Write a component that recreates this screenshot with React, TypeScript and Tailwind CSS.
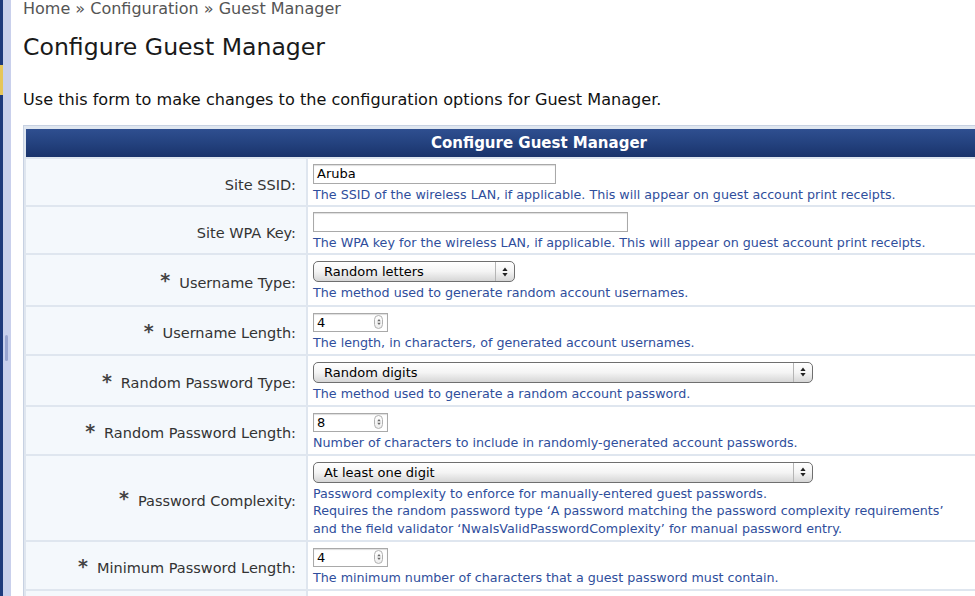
import React from 'react';

type Field = {
  label: string;
  required?: boolean;
  height: number;
  control: React.ReactNode;
  help: string[];
};

// up/down arrow pair used by the select and the number spinner
const Arrows: React.FC<{ w: number; h: number; color: string }> = ({ w, h, color }) => (
  <svg width={w} height={h} viewBox="0 0 6 10">
    <path d="M3 0.5 L5.6 4 H0.4 Z" fill={color} />
    <path d="M3 9.5 L5.6 6 H0.4 Z" fill={color} />
  </svg>
);

const SelectBox: React.FC<{ value: string; width: number }> = ({ value, width }) => (
  <div
    className="flex h-[21px] items-center rounded-[5px] border border-[#6f6f6f] bg-gradient-to-b from-white via-[#f4f4f4] to-[#d6d6d6] text-[13px] text-black shadow-[inset_0_1px_0_#fff]"
    style={{ width }}
  >
    <span className="flex-1 pl-[10px] leading-none">{value}</span>
    <span className="flex h-full w-[19px] items-center justify-center border-l border-[#b5b5b5]">
      <Arrows w={6} h={10} color="#222" />
    </span>
  </div>
);

const NumberBox: React.FC<{ value: string }> = ({ value }) => (
  <div className="flex h-[19px] w-[75px] items-center border border-[#a9a9a9] bg-white pl-[3px] pr-[4px] text-[13px] text-black shadow-[inset_0_1px_1px_#ddd]">
    <span className="flex-1 leading-none">{value}</span>
    <span className="flex h-[14px] w-[9px] items-center justify-center rounded-full border border-[#b0b0b0] bg-gradient-to-b from-white to-[#eee]">
      <Arrows w={4} h={8} color="#666" />
    </span>
  </div>
);

const TextBox: React.FC<{ value?: string; width: number }> = ({ value, width }) => (
  <div
    className="flex h-[20px] items-center border border-[#a9a9a9] bg-white pl-[3px] text-[13px] text-black shadow-[inset_0_1px_1px_#ddd]"
    style={{ width }}
  >
    <span className="leading-none">{value}</span>
  </div>
);

const fields: Field[] = [
  {
    label: 'Site SSID:',
    height: 46,
    control: <TextBox value="Aruba" width={243} />,
    help: ['The SSID of the wireless LAN, if applicable. This will appear on guest account print receipts.'],
  },
  {
    label: 'Site WPA Key:',
    height: 46,
    control: <TextBox width={315} />,
    help: ['The WPA key for the wireless LAN, if applicable. This will appear on guest account print receipts.'],
  },
  {
    label: 'Username Type:',
    required: true,
    height: 50,
    control: <SelectBox value="Random letters" width={202} />,
    help: ['The method used to generate random account usernames.'],
  },
  {
    label: 'Username Length:',
    required: true,
    height: 47,
    control: <NumberBox value="4" />,
    help: ['The length, in characters, of generated account usernames.'],
  },
  {
    label: 'Random Password Type:',
    required: true,
    height: 49,
    control: <SelectBox value="Random digits" width={500} />,
    help: ['The method used to generate a random account password.'],
  },
  {
    label: 'Random Password Length:',
    required: true,
    height: 47,
    control: <NumberBox value="8" />,
    help: ['Number of characters to include in randomly-generated account passwords.'],
  },
  {
    label: 'Password Complexity:',
    required: true,
    height: 84,
    control: <SelectBox value="At least one digit" width={500} />,
    help: [
      'Password complexity to enforce for manually-entered guest passwords.',
      'Requires the random password type ‘A password matching the password complexity requirements’',
      'and the field validator ‘NwaIsValidPasswordComplexity’ for manual password entry.',
    ],
  },
  {
    label: 'Minimum Password Length:',
    required: true,
    height: 47,
    control: <NumberBox value="4" />,
    help: ['The minimum number of characters that a guest password must contain.'],
  },
];

export default function App() {
  return (
    <div className="flex h-[596px] w-[975px] overflow-hidden bg-white font-['DejaVu_Sans',sans-serif]">
      {/* sidebar edge */}
      <div className="flex w-[3px] flex-col bg-[#1e3a7c]">
        <div className="mt-[65px] h-[30px] bg-[#e6c65a]" />
      </div>
      <div className="relative w-[8px] bg-[#c9d0ec]">
        <div className="absolute left-[2px] top-[335px] h-[26px] w-[3px] rounded-full bg-[#9aa5cf]" />
      </div>

      <div className="ml-[12px] flex min-w-0 flex-1 flex-col">
        <div className="mt-[-1px] text-[16px] leading-[20px] text-[#555]">
          Home » Configuration » Guest Manager
        </div>
        <h1 className="mt-[14px] text-[23.6px] leading-[28px] text-[#1a1a1a]">Configure Guest Manager</h1>
        <p className="mt-[29px] text-[16.1px] leading-[20px] text-[#111]">
          Use this form to make changes to the configuration options for Guest Manager.
        </p>

        <div className="mt-[15px] w-[1032px] border border-[#c7d1e2] bg-[#dfe6ef] px-[2px] pb-[2px] pt-[3px]">
          <div className="flex h-[28px] items-center justify-center bg-gradient-to-b from-[#2f4f90] via-[#24427f] to-[#1a336b] text-[15px] font-bold text-white">
            Configure Guest Manager
          </div>
          <div className="mt-[2px] grid grid-cols-[280px_1fr] gap-[2px]">
            {fields.map((f) => (
              <React.Fragment key={f.label}>
                <div
                  className="flex items-center justify-end bg-[#f4f8fc] pr-[10px] pt-[7px] text-[14.5px] text-[#333]"
                  style={{ height: f.height }}
                >
                  {f.required && (
                    <span className="relative top-[-3px] mr-[9px] text-[19px] font-bold leading-none text-[#444]">*</span>
                  )}
                  <span>{f.label}</span>
                </div>
                <div className="flex flex-col justify-center bg-white pl-[5px] pt-[3px]" style={{ height: f.height }}>
                  {f.control}
                  <div className="mt-[2px] text-[12.7px] leading-[17.5px] text-[#2f4e9c]">
                    {f.help.map((line) => (
                      <div key={line}>{line}</div>
                    ))}
                  </div>
                </div>
              </React.Fragment>
            ))}
            <div className="h-[20px] bg-[#f4f8fc]" />
            <div className="h-[20px] bg-white" />
          </div>
        </div>
      </div>
    </div>
  );
}
